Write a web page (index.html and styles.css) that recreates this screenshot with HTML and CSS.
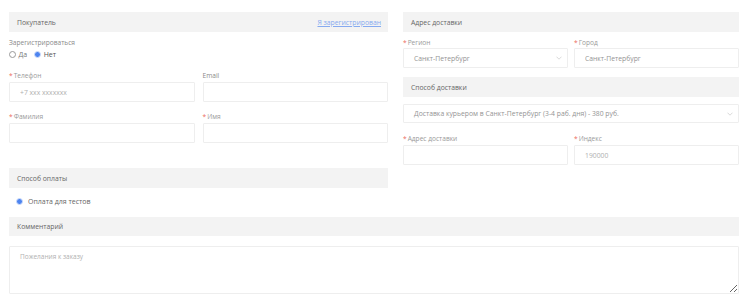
FILE: index.html
```html
<!DOCTYPE html>
<html lang="ru">
<head>
<meta charset="utf-8">
<link rel="stylesheet" href="styles.css">
</head>
<body>
<div class="page">
  <div class="top">
    <div class="col left">
      <div class="head"><span>Покупатель</span><a class="link" href="#">Я зарегистрирован</a></div>
      <div class="reg">
        <div class="label plain">Зарегистрироваться</div>
        <div class="radios">
          <span class="radio"></span><span class="rtext">Да</span>
          <span class="radio on"></span><span class="rtext dark">Нет</span>
        </div>
      </div>
      <div class="row r1">
        <div class="field">
          <div class="label"><i>*</i>Телефон</div>
          <input class="inp" placeholder="+7 xxx xxxxxxx">
        </div>
        <div class="field">
          <div class="label plain">Email</div>
          <input class="inp">
        </div>
      </div>
      <div class="row r2">
        <div class="field">
          <div class="label"><i>*</i>Фамилия</div>
          <input class="inp">
        </div>
        <div class="field">
          <div class="label"><i>*</i>Имя</div>
          <input class="inp">
        </div>
      </div>
      <div class="head pay"><span>Способ оплаты</span></div>
      <div class="payopt"><span class="radio on"></span><span class="rtext">Оплата для тестов</span></div>
    </div>
    <div class="col right">
      <div class="head"><span>Адрес доставки</span></div>
      <div class="row r3">
        <div class="field">
          <div class="label"><i>*</i>Регион</div>
          <div class="sel"><span>Санкт-Петербург</span><svg class="chev" width="6" height="4" viewBox="0 0 6 4"><path d="M0.5 0.7 L3 3.2 L5.5 0.7" fill="none" stroke="#cfcfcf" stroke-width="0.8"/></svg></div>
        </div>
        <div class="field">
          <div class="label"><i>*</i>Город</div>
          <input class="inp val" value="Санкт-Петербург">
        </div>
      </div>
      <div class="head dlv"><span>Способ доставки</span></div>
      <div class="sel wide"><span>Доставка курьером в Санкт-Петербург (3-4 раб. дня) - 380 руб.</span><svg class="chev" width="6" height="4" viewBox="0 0 6 4"><path d="M0.5 0.7 L3 3.2 L5.5 0.7" fill="none" stroke="#cfcfcf" stroke-width="0.8"/></svg></div>
      <div class="row r4">
        <div class="field">
          <div class="label"><i>*</i>Адрес доставки</div>
          <input class="inp">
        </div>
        <div class="field">
          <div class="label"><i>*</i>Индекс</div>
          <input class="inp" placeholder="190000">
        </div>
      </div>
    </div>
  </div>
  <div class="head com"><span>Комментарий</span></div>
  <textarea class="ta" placeholder="Пожелания к заказу"></textarea>
</div>
</body>
</html>
```
FILE: styles.css
```css
* { box-sizing: border-box; }
html, body { margin: 0; background: #fff; }
body { font-family: "Open Sans", "Noto Sans", sans-serif; color: #666; font-size: 7px; }
.page { padding: 12px 11px 0 9px; width: 750px; }
.top { display: grid; grid-template-columns: 379px 1fr; column-gap: 15px; }
.col { display: flex; flex-direction: column; }
.head { height: 20px; background: #f3f3f3; display: flex; align-items: center; justify-content: space-between; padding: 0 7px 0 8px; font-size: 6.8px; color: #666; }
.link { color: #86aaf0; text-decoration: underline; font-size: 6.8px; }
.reg { margin-top: 6px; }
.label { height: 9px; line-height: 9px; color: #9a9a9a; font-size: 6.6px; margin-bottom: 2px; }
.label i { font-style: normal; color: #ec6a5e; margin-right: 1px; }
.label.plain { color: #8a8a8a; }
.reg .label { margin-bottom: 0; }
.radios { height: 14px; display: flex; align-items: center; }
.radio { width: 7px; height: 7px; border-radius: 50%; border: 0.8px solid #999; display: inline-block; flex: none; background: #fff; }
.radio.on { border: 1.2px solid #d3e0fb; background: #4d84f0; }
.rtext { margin: 0 7px 0 2.5px; font-size: 7px; color: #777; }
.rtext.dark { color: #555; }
.row { display: grid; grid-template-columns: 1fr 1fr; column-gap: 8px; }
.right .row { column-gap: 6px; }
.r1 { margin-top: 10px; }
.r2 { margin-top: 10px; }
.inp { display: block; width: 100%; height: 20px; border: 1px solid #eeeeee; border-radius: 1px; padding: 0 10px; font-family: "Open Sans", "Noto Sans", sans-serif; font-size: 6.8px; color: #949494; outline: none; background: #fff; }
.inp::placeholder { color: #b0b0b0; font-size: 6.8px; }
.pay { margin-top: 25px; }
.payopt { height: 14px; margin-top: 6px; display: flex; align-items: center; padding-left: 7px; }
.payopt .rtext { margin-left: 5px; color: #666; }
.r3 .label { margin-bottom: 1px; }
.r3 { margin-top: 6px; }
.sel { height: 20px; border: 1px solid #eeeeee; border-radius: 1px; display: flex; align-items: center; justify-content: space-between; padding: 0 5px 0 10px; font-size: 6.8px; color: #949494; }
.dlv { margin-top: 9px; }
.sel.wide { margin-top: 7px; height: 19px; font-size: 6.8px; }
.r4 { margin-top: 11px; }
.r4 .label { margin-bottom: 2px; }
.com { margin-top: 9px; height: 19px; }
.ta { display: block; margin-top: 10px; width: 100%; height: 48px; border: 1px solid #eeeeee; border-radius: 1px; padding: 5px 10px; font-family: "Open Sans", "Noto Sans", sans-serif; font-size: 6.5px; color: #888; outline: none; resize: both; }
.ta::placeholder { color: #b0b0b0; }
```
